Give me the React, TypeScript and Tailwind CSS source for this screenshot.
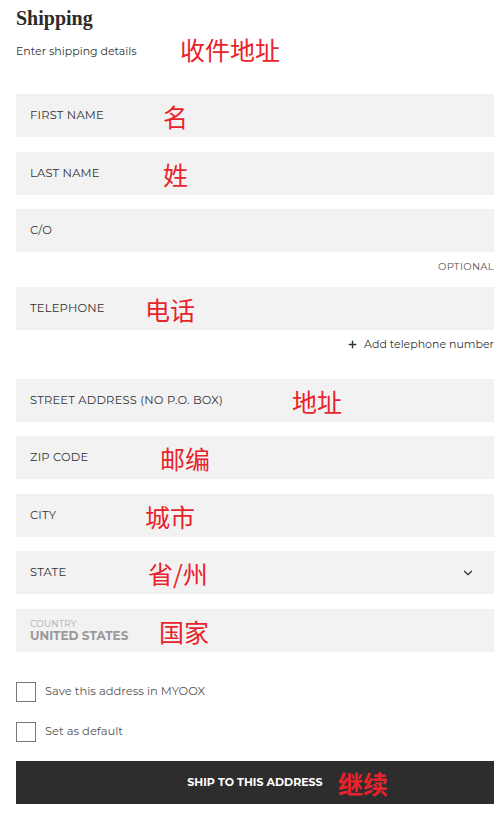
import { ChevronDown, Plus } from "lucide-react"

const sans = "font-['Montserrat','Open_Sans','Noto_Sans_CJK_SC',sans-serif]"
const cjk = "font-['Noto_Sans_CJK_SC',sans-serif]"

function Note({ text, left }: { text: string; left: string }) {
  return (
    <span
      className={`absolute top-1/2 -translate-y-1/2 ${left} ${cjk} text-[25px] leading-none text-[#e8232b]`}
    >
      {text}
    </span>
  )
}

function Field({
  label,
  note,
  noteLeft,
  className = "",
  select = false,
}: {
  label: string
  note?: string
  noteLeft?: string
  className?: string
  select?: boolean
}) {
  return (
    <div className={`relative flex h-[43px] items-center bg-[#f2f2f2] pl-[14px] pr-[19px] ${className}`}>
      <span className="text-[11.5px] tracking-[0.2px] text-[#333]">{label}</span>
      {note && noteLeft && <Note text={note} left={noteLeft} />}
      {select && <ChevronDown className="ml-auto h-[14px] w-[14px] text-[#333]" strokeWidth={2} />}
    </div>
  )
}

function Check({ label, className = "" }: { label: string; className?: string }) {
  return (
    <label className={`flex items-center ${className}`}>
      <span className="h-[20px] w-[20px] border border-[#777] bg-white" />
      <span className="ml-[9px] text-[11.5px] text-[#555]">{label}</span>
    </label>
  )
}

export default function App() {
  return (
    <div className={`min-h-screen bg-white pl-4 pr-[10px] ${sans}`}>
      <div className="relative pt-[6px]">
        <h1 className="font-['Liberation_Serif',serif] text-[20px] font-bold leading-[24px] text-[#2b2b2b]">
          Shipping
        </h1>
        <p className="mt-[13px] text-[11px] leading-[16px] text-[#333]">Enter shipping details</p>
        <span className={`absolute left-[164px] top-[35px] ${cjk} text-[25px] leading-[28px] text-[#e8232b]`}>
          收件地址
        </span>
      </div>

      <Field label="FIRST NAME" note="名" noteLeft="left-[147px]" className="mt-[35px]" />
      <Field label="LAST NAME" note="姓" noteLeft="left-[147px]" className="mt-[15px]" />
      <Field label="C/O" className="mt-[14px]" />
      <div className="mt-[7px] flex h-[14px] items-center justify-end text-[10px] tracking-[0.3px] text-[#555]">
        OPTIONAL
      </div>
      <Field label="TELEPHONE" note="电话" noteLeft="left-[129px]" className="mt-[14px]" />
      <div className="mt-[7px] flex h-[14px] items-center justify-end text-[11px] text-[#333]">
        <Plus className="mr-[6px] h-[11px] w-[11px]" strokeWidth={3} />
        Add telephone number
      </div>
      <Field label="STREET ADDRESS (NO P.O. BOX)" note="地址" noteLeft="left-[276px]" className="mt-[28px]" />
      <Field label="ZIP CODE" note="邮编" noteLeft="left-[144px]" className="mt-[14px]" />
      <Field label="CITY" note="城市" noteLeft="left-[129px]" className="mt-[15px]" />
      <Field label="STATE" note="省/州" noteLeft="left-[132px]" className="mt-[14px]" select />

      <div className="relative mt-[15px] flex h-[43px] flex-col justify-center bg-[#f2f2f2] pl-[14px]">
        <span className="text-[9px] leading-[10px] tracking-[0.2px] text-[#aaa]">COUNTRY</span>
        <span className="text-[12px] font-bold leading-[14px] text-[#999]">UNITED STATES</span>
        <Note text="国家" left="left-[143px]" />
      </div>

      <Check label="Save this address in MYOOX" className="mt-[30px]" />
      <Check label="Set as default" className="mt-[20px]" />

      <button className="relative mt-[19px] flex h-[43px] w-full items-center justify-center bg-[#2e2d2d] text-[11px] font-bold text-white">
        SHIP TO THIS ADDRESS
        <Note text="继续" left="left-[322px]" />
      </button>
    </div>
  )
}
